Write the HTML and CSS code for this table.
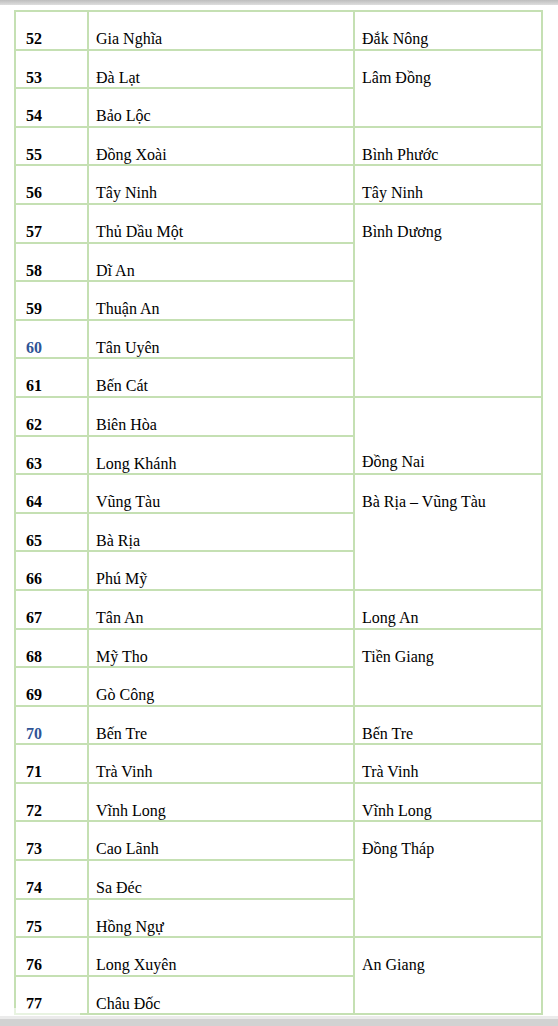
FILE: index.html
```html
<!DOCTYPE html>
<html lang="vi">
<head>
<meta charset="utf-8">
<title>Danh sách thành phố</title>
<link rel="stylesheet" href="styles.css">
</head>
<body>
<div class="topbar"></div>
<main class="sheet">
<table class="cities">
<colgroup><col class="c1"><col class="c2"><col class="c3"></colgroup>
<tbody>
<tr><td class="num">52</td><td>Gia Nghĩa</td><td>Đắk Nông</td></tr>
<tr><td class="num">53</td><td>Đà Lạt</td><td rowspan="2">Lâm Đồng</td></tr>
<tr><td class="num">54</td><td>Bảo Lộc</td></tr>
<tr><td class="num">55</td><td>Đồng Xoài</td><td>Bình Phước</td></tr>
<tr><td class="num">56</td><td>Tây Ninh</td><td>Tây Ninh</td></tr>
<tr><td class="num">57</td><td>Thủ Dầu Một</td><td rowspan="5">Bình Dương</td></tr>
<tr><td class="num">58</td><td>Dĩ An</td></tr>
<tr><td class="num">59</td><td>Thuận An</td></tr>
<tr><td class="num blue">60</td><td>Tân Uyên</td></tr>
<tr><td class="num">61</td><td>Bến Cát</td></tr>
<tr><td class="num">62</td><td>Biên Hòa</td><td rowspan="2" class="bottom">Đồng Nai</td></tr>
<tr><td class="num">63</td><td>Long Khánh</td></tr>
<tr><td class="num">64</td><td>Vũng Tàu</td><td rowspan="3">Bà Rịa – Vũng Tàu</td></tr>
<tr><td class="num">65</td><td>Bà Rịa</td></tr>
<tr><td class="num">66</td><td>Phú Mỹ</td></tr>
<tr><td class="num">67</td><td>Tân An</td><td>Long An</td></tr>
<tr><td class="num">68</td><td>Mỹ Tho</td><td rowspan="2">Tiền Giang</td></tr>
<tr><td class="num">69</td><td>Gò Công</td></tr>
<tr><td class="num blue">70</td><td>Bến Tre</td><td>Bến Tre</td></tr>
<tr><td class="num">71</td><td>Trà Vinh</td><td>Trà Vinh</td></tr>
<tr><td class="num">72</td><td>Vĩnh Long</td><td>Vĩnh Long</td></tr>
<tr><td class="num">73</td><td>Cao Lãnh</td><td rowspan="3">Đồng Tháp</td></tr>
<tr><td class="num">74</td><td>Sa Đéc</td></tr>
<tr><td class="num">75</td><td>Hồng Ngự</td></tr>
<tr><td class="num">76</td><td>Long Xuyên</td><td rowspan="2">An Giang</td></tr>
<tr><td class="num">77</td><td>Châu Đốc</td></tr>
</tbody>
</table>
<div class="fade"></div>
</main>
<div class="bottombar"></div>
</body>
</html>
```

FILE: styles.css
```css
html, body {
  margin: 0;
  padding: 0;
  background: #ffffff;
}
body {
  width: 558px;
  height: 1026px;
  overflow: hidden;
  font-family: "Liberation Serif", "Times New Roman", serif;
  font-size: 16px;
  color: #000000;
}
.topbar {
  height: 5px;
  background: linear-gradient(#bdbdbd, #dedede);
}
.sheet {
  position: relative;
  padding: 5px 0 0 14px;
  height: 1006px;
}
.cities {
  border-collapse: collapse;
  table-layout: fixed;
  width: 527px;
}
.c1 { width: 73px; }
.c2 { width: 266px; }
.c3 { width: 188px; }
.cities td {
  border: 2px solid #c5e0b3;
  height: 38.6px;
  box-sizing: border-box;
  vertical-align: top;
  padding: 18px 8px 0 7px;
  line-height: 18px;
  white-space: nowrap;
}
.cities td.num {
  font-weight: bold;
  padding-left: 10px;
}
.cities td.blue {
  color: #2f5496;
}
.cities td.bottom {
  vertical-align: bottom;
  padding-top: 0;
  padding-bottom: 2px;
}
.fade {
  position: absolute;
  left: 0;
  bottom: 0;
  width: 80px;
  height: 8px;
  background: rgba(255, 255, 255, 0.6);
}
.bottombar {
  height: 10px;
  border-top: 3px solid #ebebeb;
  background: #d2d2d2;
}
```
